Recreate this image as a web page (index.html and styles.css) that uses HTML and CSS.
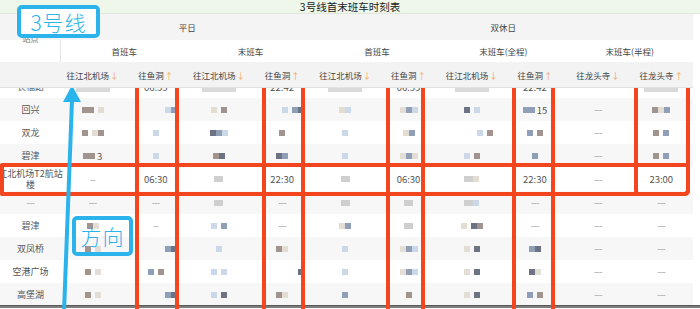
FILE: index.html
```html
<!DOCTYPE html>
<html lang="zh">
<head>
<meta charset="utf-8">
<title>3号线首末班车时刻表</title>
<link rel="stylesheet" href="styles.css">
</head>
<body>
<div class="page">
  <div class="title">3号线首末班车时刻表</div>

  <div class="row hr1">
    <div class="c st">站点</div>
    <div class="c s4">平日</div>
    <div class="c s6">双休日</div>
  </div>
  <div class="row hr2">
    <div class="c lf"></div>
    <div class="c s2">首班车</div>
    <div class="c s2">末班车</div>
    <div class="c s2">首班车</div>
    <div class="c s2">末班车(全程)</div>
    <div class="c s2">末班车(半程)</div>
  </div>
  <div class="row hr3">
    <div class="c"></div>
    <div class="c">往江北机场<b class="ar">↓</b></div>
    <div class="c">往鱼洞<b class="ar">↑</b></div>
    <div class="c">往江北机场<b class="ar">↓</b></div>
    <div class="c">往鱼洞<b class="ar">↑</b></div>
    <div class="c">往江北机场<b class="ar">↓</b></div>
    <div class="c">往鱼洞<b class="ar">↑</b></div>
    <div class="c">往江北机场<b class="ar">↓</b></div>
    <div class="c">往鱼洞<b class="ar">↑</b></div>
    <div class="c">往龙头寺<b class="ar">↓</b></div>
    <div class="c">往龙头寺<b class="ar">↑</b></div>
  </div>

  <div class="bodywrap">
    <div class="rows">
      <div class="row dr">
        <div class="c nm">长福路</div>
        <div class="c"><i class="bar"></i></div>
        <div class="c">06:55</div>
        <div class="c"><i class="bar"></i></div>
        <div class="c">22:42</div>
        <div class="c"><i class="bar"></i></div>
        <div class="c">06:55</div>
        <div class="c"><i class="bar"></i></div>
        <div class="c">22:42</div>
        <div class="c dash">---</div>
        <div class="c"><i class="bar"></i></div>
      </div>
      <div class="row dr alt">
        <div class="c nm">回兴</div>
        <div class="c"><i class="k a"></i><i class="k a"></i><i class="sp"></i><i class="k b"></i></div>
        <div class="c rt"><i class="k d"></i><i class="k c"></i></div>
        <div class="c"><i class="k b"></i><i class="sp"></i><i class="k a"></i></div>
        <div class="c rt"><i class="k d"></i><i class="sp"></i><i class="k c"></i><i class="k e"></i></div>
        <div class="c"><i class="k b"></i><i class="k d"></i></div>
        <div class="c"><i class="k b"></i><i class="k c"></i><i class="k d"></i></div>
        <div class="c"><i class="k e"></i><i class="sp"></i><i class="k d"></i></div>
        <div class="c"><i class="k c"></i><i class="k c"></i>&nbsp;15</div>
        <div class="c dash">---</div>
        <div class="c"><i class="k a"></i><i class="k b"></i><i class="k c"></i></div>
      </div>
      <div class="row dr">
        <div class="c nm">双龙</div>
        <div class="c"><i class="k a"></i><i class="sp"></i><i class="k b"></i><i class="k a"></i></div>
        <div class="c"><i class="k d"></i></div>
        <div class="c"><i class="k e"></i><i class="k c"></i><i class="k d"></i></div>
        <div class="c"><i class="k a"></i></div>
        <div class="c"><i class="k d"></i></div>
        <div class="c"><i class="k b"></i><i class="k c"></i></div>
        <div class="c rt"><i class="k d"></i><i class="sp"></i><i class="k a"></i></div>
        <div class="c"><i class="k c"></i><i class="sp"></i><i class="k a"></i></div>
        <div class="c dash">---</div>
        <div class="c"><i class="k a"></i><i class="sp"></i><i class="k c"></i></div>
      </div>
      <div class="row dr alt">
        <div class="c nm">碧津</div>
        <div class="c"><i class="k a"></i><i class="k a"></i>&nbsp;3</div>
        <div class="c"><i class="k d"></i></div>
        <div class="c"><i class="k a"></i><i class="k e"></i></div>
        <div class="c"><i class="k e"></i><i class="k c"></i></div>
        <div class="c"><i class="k d"></i></div>
        <div class="c"><i class="k b"></i><i class="k c"></i><i class="k b"></i></div>
        <div class="c"><i class="k d"></i><i class="sp"></i><i class="k a"></i></div>
        <div class="c"><i class="k c"></i></div>
        <div class="c dash">---</div>
        <div class="c"><i class="k a"></i><i class="sp"></i><i class="k c"></i></div>
      </div>
      <div class="row dr tall">
        <div class="c nm two">江北机场T2航站<br>楼</div>
        <div class="c dash">--</div>
        <div class="c">06:30</div>
        <div class="c"><i class="k g"></i></div>
        <div class="c">22:30</div>
        <div class="c"><i class="k g"></i></div>
        <div class="c">06:30</div>
        <div class="c"><i class="k g"></i><i class="k b"></i></div>
        <div class="c">22:30</div>
        <div class="c dash">---</div>
        <div class="c">23:00</div>
      </div>
      <div class="row dr alt">
        <div class="c nm dash">---</div>
        <div class="c dash">---</div>
        <div class="c dash">---</div>
        <div class="c"><i class="k g"></i></div>
        <div class="c dash">---</div>
        <div class="c"><i class="k g"></i></div>
        <div class="c"><i class="k g"></i></div>
        <div class="c"><i class="k g"></i><i class="k d"></i></div>
        <div class="c dash">---</div>
        <div class="c dash">---</div>
        <div class="c dash">---</div>
      </div>
      <div class="row dr">
        <div class="c nm">碧津</div>
        <div class="c"><i class="k a"></i><i class="k b"></i></div>
        <div class="c dash">--</div>
        <div class="c"><i class="k d"></i><i class="sp"></i><i class="k c"></i></div>
        <div class="c dash">---</div>
        <div class="c"><i class="k b"></i><i class="k c"></i></div>
        <div class="c"><i class="k g"></i></div>
        <div class="c"><i class="k b"></i><i class="sp"></i><i class="k e"></i><i class="k a"></i></div>
        <div class="c dash">---</div>
        <div class="c dash">---</div>
        <div class="c dash">---</div>
      </div>
      <div class="row dr alt">
        <div class="c nm">双凤桥</div>
        <div class="c"><i class="k a"></i><i class="sp"></i><i class="k b"></i></div>
        <div class="c rt"><i class="k c"></i><i class="k e"></i></div>
        <div class="c"><i class="k d"></i></div>
        <div class="c"><i class="k a"></i><i class="k b"></i></div>
        <div class="c"><i class="k d"></i></div>
        <div class="c"><i class="k b"></i><i class="k c"></i><i class="k d"></i></div>
        <div class="c"><i class="k b"></i><i class="sp"></i><i class="k e"></i></div>
        <div class="c"><i class="k c"></i><i class="k e"></i></div>
        <div class="c dash">---</div>
        <div class="c dash">---</div>
      </div>
      <div class="row dr">
        <div class="c nm">空港广场</div>
        <div class="c"><i class="k a"></i><i class="sp"></i><i class="k b"></i></div>
        <div class="c"><i class="k c"></i><i class="sp"></i><i class="k a"></i></div>
        <div class="c"><i class="k d"></i><i class="sp"></i><i class="k d"></i></div>
        <div class="c rt"><i class="k e"></i></div>
        <div class="c"><i class="k d"></i></div>
        <div class="c"><i class="k b"></i><i class="k c"></i><i class="k d"></i></div>
        <div class="c"><i class="k b"></i><i class="sp"></i><i class="k e"></i></div>
        <div class="c"><i class="k e"></i><i class="k b"></i></div>
        <div class="c dash">---</div>
        <div class="c dash">---</div>
      </div>
      <div class="row dr alt">
        <div class="c nm">高堡湖</div>
        <div class="c"><i class="k a"></i><i class="sp"></i><i class="k b"></i></div>
        <div class="c rt"><i class="k c"></i><i class="k e"></i></div>
        <div class="c"><i class="k d"></i><i class="sp"></i><i class="k e"></i></div>
        <div class="c"><i class="k a"></i><i class="k b"></i></div>
        <div class="c"><i class="k c"></i></div>
        <div class="c"><i class="k a"></i></div>
        <div class="c"><i class="k b"></i><i class="sp"></i><i class="k e"></i></div>
        <div class="c"><i class="k c"></i><i class="sp"></i><i class="k a"></i></div>
        <div class="c dash">---</div>
        <div class="c dash">---</div>
      </div>
    </div>
  </div>
  <div class="foot"></div>

  <div class="overlay">
    <div class="rbox b1"></div>
    <div class="rbox b2"></div>
    <div class="rbox b3"></div>
    <div class="rbox b4"></div>
    <div class="rbox b5"></div>
    <div class="rbox bh"></div>
    <svg class="arrow" width="700" height="309" viewBox="0 0 700 309">
      <line x1="64" y1="312" x2="72" y2="100" stroke="#2bb3ec" stroke-width="4"/>
      <polygon points="72,85 63,102 81,102" fill="#2bb3ec"/>
    </svg>
    <div class="label l1">3号线</div>
    <div class="label l2">方向</div>
  </div>
</div>
</body>
</html>
```

FILE: styles.css
```css
* { box-sizing: border-box; }
html, body { margin: 0; padding: 0; background: #fff; }
body {
  font-family: "Noto Sans CJK SC", "Noto Sans", sans-serif;
  color: #555;
  font-size: 9px;
}
.page {
  position: relative;
  width: 700px;
  height: 309px;
  overflow: hidden;
  background: #fff;
}
.title {
  height: 14px;
  background: #eef7ea;
  border-bottom: 1px solid #dfe8db;
  text-align: center;
  font-size: 10.5px;
  line-height: 14px;
  color: #222;
}
.row {
  display: grid;
  grid-template-columns: 61px repeat(10, 63.2px);
  width: 693px;
}
.c {
  display: flex;
  align-items: center;
  justify-content: center;
  white-space: nowrap;
}
.s2 { grid-column: span 2; }
.s4 { grid-column: span 4; }
.s6 { grid-column: span 6; }

.hr1 { height: 26px; background: #f4f4f4; font-size: 8.5px; color: #444; }
.hr1 .st { align-items: flex-end; font-size: 8px; color: #777; line-height: 9px; margin-bottom: -3px; }
.hr2 { height: 22px; background: #fff; font-size: 8.5px; color: #444; }
.hr2 .lf { border-right: 1px solid #e4e4e4; }
.hr3 { height: 26px; background: #f3f3f3; border-bottom: 1px solid #e2e2e2; font-size: 8.5px; color: #444; position: relative; z-index: 1; }
.ar { font-weight: normal; color: #f3a35a; margin-left: 1px; }

.bodywrap { height: 217px; overflow: hidden; }
.rows { margin-top: -13px; }
.dr { height: 23px; background: #fff; font-size: 9.5px; color: #555; }
.dr.alt { background: #f7f7f7; }
.dr.tall { height: 24px; }
.nm { font-size: 9px; color: #555; }
.two { text-align: center; line-height: 11px; font-size: 9px; overflow: visible; }
.dash { color: #9a9a9a; font-size: 9px; letter-spacing: -0.5px; }
.rt { justify-content: flex-end; padding-right: 10px; }

.k { display: inline-block; width: 6px; height: 6px; filter: blur(0.5px); }
.sp { display: inline-block; width: 4px; }
.k.a { background: #a1948f; }
.k.b { background: #e3ddd4; }
.k.c { background: #8e9fb7; }
.k.d { background: #cad8e8; }
.k.e { background: #6e7384; }
.k.g { background: #cfcfcf; width: 9px; }
.bar { display: inline-block; width: 34px; height: 4px; background: #d9d9d9; filter: blur(0.6px); margin-top: 6px; }

.foot { height: 3px; background: #7d7d7d; border-top: 1px solid #5a5a5a; }

.overlay { position: absolute; left: 0; top: 0; width: 700px; height: 309px; pointer-events: none; }
.rbox { position: absolute; border: 4px solid #f3461f; border-radius: 5px; }
.b1 { left: 135px; top: 63px; width: 44px; height: 270px; }
.b2 { left: 262px; top: 63px; width: 43px; height: 270px; }
.b3 { left: 386px; top: 63px; width: 39px; height: 270px; }
.b4 { left: 512px; top: 63px; width: 43px; height: 270px; }
.b5 { left: 634px; top: 63px; width: 56px; height: 133px; }
.bh { left: 0; top: 163px; width: 690px; height: 33px; border-radius: 2px 2px 6px 2px; }
.arrow { position: absolute; left: 0; top: 0; }
.label {
  position: absolute;
  border: 4px solid #2bb3ec;
  border-radius: 5px;
  color: #2bb3ec;
  font-family: "Noto Sans CJK SC", sans-serif;
  font-weight: 300;
  font-size: 21px;
  display: flex;
  align-items: center;
  justify-content: center;
}
.l1 { left: 17px; top: 5px; width: 83px; height: 33px; background: #fff; letter-spacing: 1px; }
.l2 { left: 72px; top: 216px; width: 61px; height: 40px; letter-spacing: 1px; }
```
